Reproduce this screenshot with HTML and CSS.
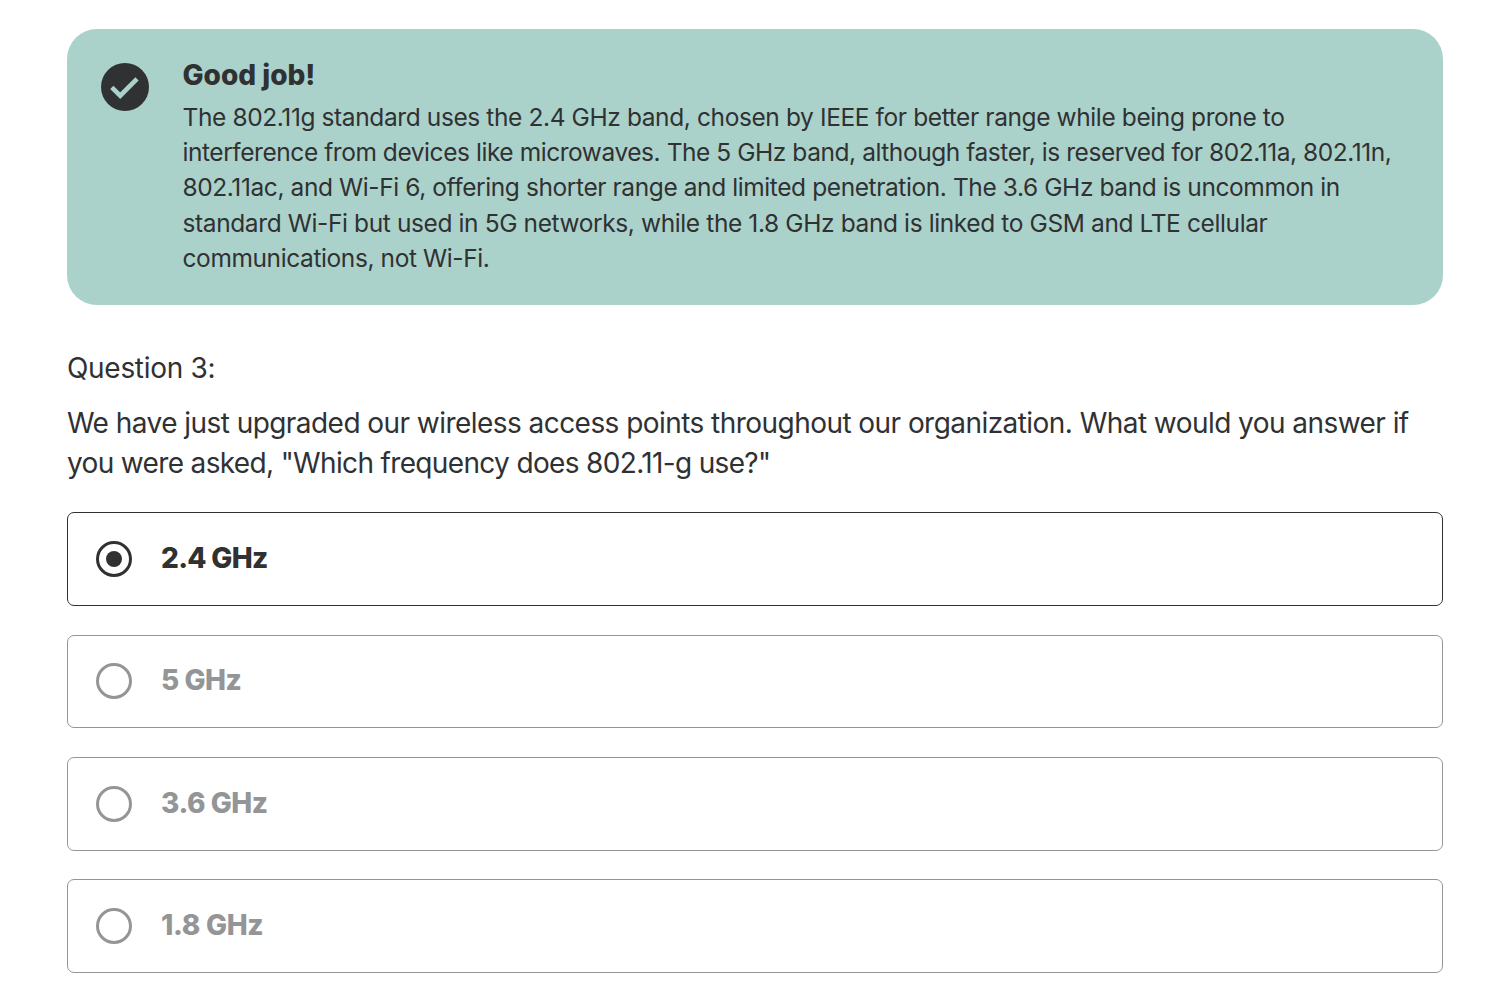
FILE: index.html
```html
<!DOCTYPE html>
<html lang="en">
<head>
<meta charset="utf-8">
<title>Question 3</title>
<link rel="stylesheet" href="styles.css">
</head>
<body>
<main class="quiz">
  <section class="feedback">
    <svg class="feedback-icon" viewBox="0 0 48 48"><circle cx="24" cy="24" r="24" fill="#303133"/><path d="M10.8 24.4 19.2 32.7 36 15.8" fill="none" stroke="#abd2ca" stroke-width="4.6"/></svg>
    <div class="feedback-body">
      <h2 class="feedback-title">Good job!</h2>
      <p class="feedback-text"><span class="f1">The 802.11g standard uses the 2.4 GHz band, chosen by IEEE for better range while being prone to</span><br><span class="f2">interference from devices like microwaves. The 5 GHz band, although faster, is reserved for 802.11a, 802.11n,</span><br><span class="f3">802.11ac, and Wi-Fi 6, offering shorter range and limited penetration. The 3.6 GHz band is uncommon in</span><br><span class="f4">standard Wi-Fi but used in 5G networks, while the 1.8 GHz band is linked to GSM and LTE cellular</span><br><span class="f5">communications, not Wi-Fi.</span></p>
    </div>
  </section>
  <p class="question-number">Question 3:</p>
  <p class="question"><span class="q1">We have just upgraded our wireless access points throughout our organization. What would you answer if</span><br><span class="q2">you were asked, "Which frequency does 802.11-g use?"</span></p>
  <div class="options">
    <label class="option selected"><span class="radio"></span><span class="answer a1">2.4 GHz</span></label>
    <label class="option"><span class="radio"></span><span class="answer a2">5 GHz</span></label>
    <label class="option"><span class="radio"></span><span class="answer a3">3.6 GHz</span></label>
    <label class="option"><span class="radio"></span><span class="answer a4">1.8 GHz</span></label>
  </div>
</main>
</body>
</html>
```
FILE: styles.css
```css
* { box-sizing: border-box; }
body { margin: 0; background: #fff; color: #303133; font-family: Inter, sans-serif; }
.quiz { padding: 29px 50px 0 67px; }
.feedback { display: flex; gap: 33.5px; height: 276px; padding: 28px 34px; border-radius: 30px; background: #abd2ca; }
.feedback-icon { flex: none; width: 48px; height: 48px; margin-top: 6px; }
.feedback-body { white-space: nowrap; }
.feedback-title { margin: 0 0 7px; font-size: 28px; line-height: 36px; font-weight: 800; letter-spacing: 0; }
.feedback-text { margin: 0; font-size: 24.5px; line-height: 35.2px; }
.f1 { letter-spacing: -0.395px; }
.f2 { letter-spacing: -0.445px; }
.f3 { letter-spacing: -0.41px; }
.f4 { letter-spacing: -0.39px; }
.f5 { letter-spacing: -0.4px; }
.question-number { margin: 43px 0 0; font-size: 28px; line-height: 40px; letter-spacing: -0.3px; white-space: nowrap; }
.question { margin: 15px 0 0; font-size: 28px; line-height: 40px; white-space: nowrap; }
.q1 { letter-spacing: -0.55px; }
.q2 { letter-spacing: -0.65px; }
.options { display: grid; gap: 28.65px; margin-top: 29.35px; }
.option { display: flex; align-items: center; gap: 29px; height: 93.65px; padding-left: 28px; border: 1px solid #949596; border-radius: 7px; color: #949596; font-size: 28px; font-weight: 800; }
.answer { padding-bottom: 2px; }
.a1 { letter-spacing: -0.7px; }
.a2 { letter-spacing: -0.5px; }
.a3 { letter-spacing: -0.45px; }
.a4 { letter-spacing: -0.3px; }
.selected { border-color: #303133; color: #303133; }
.radio { display: grid; place-items: center; width: 36px; height: 36px; border: 3px solid #949596; border-radius: 50%; }
.selected .radio { border-color: #303133; }
.selected .radio::after { content: ""; width: 16px; height: 16px; border-radius: 50%; background: #303133; }
```
